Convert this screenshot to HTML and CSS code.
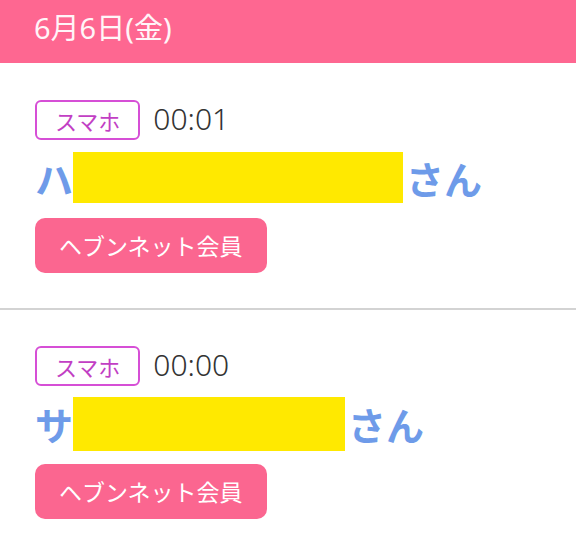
FILE: index.html
```html
<!DOCTYPE html>
<html lang="ja">
<head>
<meta charset="utf-8">
<link rel="stylesheet" href="styles.css">
</head>
<body>
<div class="page">
  <header class="date-header">6月6日(金)</header>
  <section class="entry">
    <div class="meta">
      <span class="badge">スマホ</span>
      <span class="time">00:01</span>
    </div>
    <div class="name">
      <span class="initial">ハ</span><span class="mask mask-long"></span><span class="suffix">さん</span>
    </div>
    <div class="member-btn">ヘブンネット会員</div>
  </section>
  <section class="entry entry-sep">
    <div class="meta">
      <span class="badge">スマホ</span>
      <span class="time">00:00</span>
    </div>
    <div class="name">
      <span class="initial">サ</span><span class="mask mask-short"></span><span class="suffix">さん</span>
    </div>
    <div class="member-btn">ヘブンネット会員</div>
  </section>
</div>
</body>
</html>
```
FILE: styles.css
```css
html, body {
  margin: 0;
  padding: 0;
  background: #ffffff;
}
body {
  font-family: "Noto Sans CJK JP", "Noto Sans", sans-serif;
  width: 576px;
  height: 553px;
  overflow: hidden;
}
.page {
  display: flex;
  flex-direction: column;
}
.date-header {
  height: 63px;
  box-sizing: border-box;
  background: #fe6791;
  color: #fff5f8;
  font-family: "Noto Sans", "Noto Sans CJK JP", sans-serif;
  font-size: 29px;
  font-weight: 400;
  line-height: 1;
  display: flex;
  align-items: center;
  padding: 0 0 8px 34px;
}
.entry {
  padding: 37px 34px 35px 35px;
  display: flex;
  flex-direction: column;
  align-items: flex-start;
}
.entry-sep {
  border-top: 2px solid #d3d3d3;
  padding-top: 36px;
}
.meta {
  display: flex;
  align-items: center;
  gap: 13px;
}
.badge {
  height: 40px;
  box-sizing: border-box;
  border: 2px solid #d64fd6;
  border-radius: 6px;
  padding: 0 18px;
  color: #c23fc4;
  font-size: 22px;
  display: flex;
  align-items: center;
  line-height: 1;
}
.time {
  font-family: "Noto Sans", sans-serif;
  font-size: 30px;
  color: #333333;
  line-height: 1;
  font-weight: 300;
  margin-bottom: 2px;
}
.name {
  margin-top: 9px;
  height: 57px;
  display: flex;
  align-items: center;
  color: #6e9be9;
  font-size: 38px;
  font-weight: 700;
  line-height: 1;
}
.mask {
  display: block;
  height: 51px;
  background: #ffe900;
  margin-right: 3px;
}
.mask-long { width: 330px; }
.mask-short { width: 272px; height: 54px; }
.member-btn {
  margin-top: 12px;
  height: 55px;
  box-sizing: border-box;
  padding: 0 24px;
  background: #fb6690;
  border-radius: 10px;
  color: #ffffff;
  font-size: 23px;
  font-weight: 400;
  display: flex;
  align-items: center;
  line-height: 1;
}
```
